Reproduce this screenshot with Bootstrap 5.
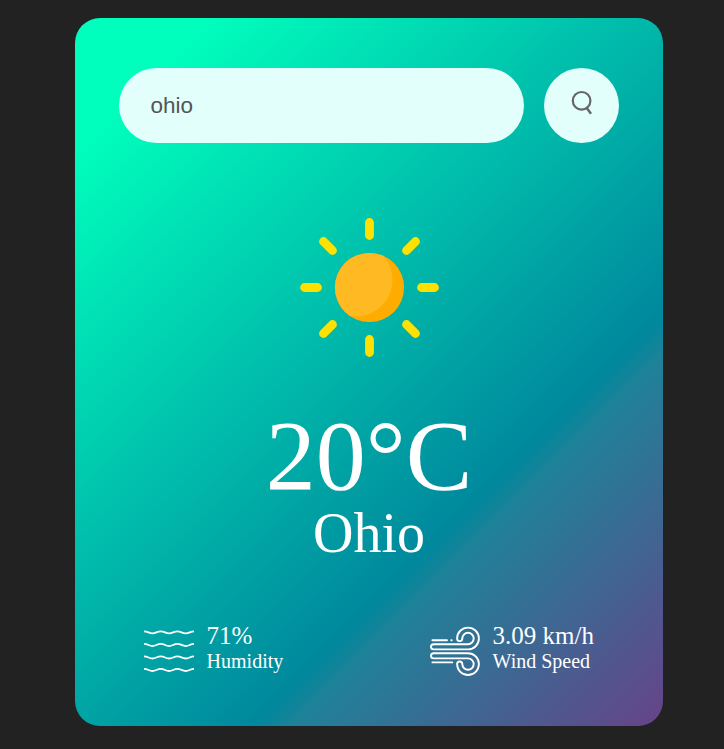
<!DOCTYPE html>
<html lang="en">
<head>
<meta charset="utf-8">
<meta name="viewport" content="width=device-width, initial-scale=1">
<title>Weather</title>
<link href="https://cdn.jsdelivr.net/npm/bootstrap@5.3.0/dist/css/bootstrap.min.css" rel="stylesheet">
<style>
body { background: #222; font-family: "Liberation Serif", "Times New Roman", serif; overflow: hidden; }
.weather-card {
  width: 588px; height: 708px; margin: 18px 0 0 75px; padding: 50px 44px 0; border-radius: 25px;
  background: linear-gradient(135deg, #00ffbd 10%, #00889d 68.3%, #208199 71.6%, #674389 100%);
}
.search-bar { gap: 20px; }
.search-bar .form-control {
  height: 75px; padding: 10px 31.4px; background: #e3fffc; color: #555;
  font: 22.5px "Liberation Sans", Arial, sans-serif;
}
.search-bar .btn { width: 75px; height: 75px; background: #e3fffc; }
.sun-icon { width: 170px; height: 170px; margin-top: 60px; }
.temperature { font-size: 100px; line-height: 99px; margin-top: 33px; font-weight: 500; }
.city { font-size: 56px; line-height: 56px; font-weight: 400; }
.details { margin-top: 61px; padding: 0 25px; }
.detail-item { gap: 12.6px; }
.detail-text { padding-bottom: 6px; }
.reading { font-size: 25px; line-height: 28px; }
.caption-text { font-size: 20px; line-height: 23px; }
</style>
<script src="https://cdn.jsdelivr.net/npm/bootstrap@5.3.0/dist/js/bootstrap.bundle.min.js"></script>
</head>
<body>
<main class="weather-card text-white text-center">
  <form class="search-bar d-flex align-items-center">
    <input class="form-control border-0 rounded-pill flex-fill" type="text" value="ohio" aria-label="City">
    <button class="btn border-0 rounded-circle flex-shrink-0 p-0" type="button" aria-label="Search">
      <svg class="d-block" width="75" height="75" viewBox="0 0 75 75" fill="none" stroke="#666">
        <circle cx="37.6" cy="32.8" r="8.8" stroke-width="2.2"/>
        <path d="M42.2 39.2 47 45.8" stroke-width="2.4"/>
      </svg>
    </button>
  </form>
  <svg class="sun-icon" viewBox="-85.5 -84.5 170 170">
    <defs><clipPath id="disc"><circle r="34.6"/></clipPath></defs>
    <path d="M0-65V-52M0 52V65M-65 0H-52M52 0H65M-46-46-37-37M37 37 46 46M46-46 37-37M-37 37-46 46" stroke="#ffe100" stroke-width="8.8" stroke-linecap="round"/>
    <circle r="34.6" fill="#ffac00"/>
    <circle cx="-13.5" cy="-7.5" r="36.5" fill="#ffb922" clip-path="url(#disc)"/>
  </svg>
  <h1 class="temperature mb-0">20°C</h1>
  <h2 class="city mb-0">Ohio</h2>
  <div class="details d-flex justify-content-between text-start">
    <div class="detail-item d-flex align-items-center">
      <svg width="50" height="50" viewBox="0 -0.3 50 50" fill="none" stroke="#fff" stroke-width="1.8">
        <path id="ripple" d="M0 5C4 5 5 7.1 8.4 7.1S13 5 16.8 5 21.5 7.1 25 7.1 29.8 5 33.4 5 38 7.1 41.7 7.1 46 5 50 5"/>
        <use href="#ripple" y="12.6"/>
        <use href="#ripple" y="25.1"/>
        <use href="#ripple" y="37.6"/>
      </svg>
      <div class="detail-text">
        <div class="reading">71%</div>
        <div class="caption-text">Humidity</div>
      </div>
    </div>
    <div class="detail-item d-flex align-items-center">
      <svg width="50" height="50" viewBox="0 0 50 50" fill="none" stroke="#fff" stroke-width="1.9" stroke-linecap="round">
        <path id="gust" d="M3.6 23.4H38A10.9 10.9 0 1 0 27.1 12.5A2.6 2.6 0 0 0 32.3 12.5A5.7 5.7 0 1 1 38 18.2H3.6A2.6 2.6 0 0 0 3.6 23.4Z"/>
        <path d="M2.4 14.2H17M21.3 14.2H21.7M2.4 36.4H22.3"/>
        <use href="#gust" transform="matrix(1 0 0 -1 0 50.6)"/>
      </svg>
      <div class="detail-text">
        <div class="reading">3.09 km/h</div>
        <div class="caption-text">Wind Speed</div>
      </div>
    </div>
  </div>
</main>
</body>
</html>
